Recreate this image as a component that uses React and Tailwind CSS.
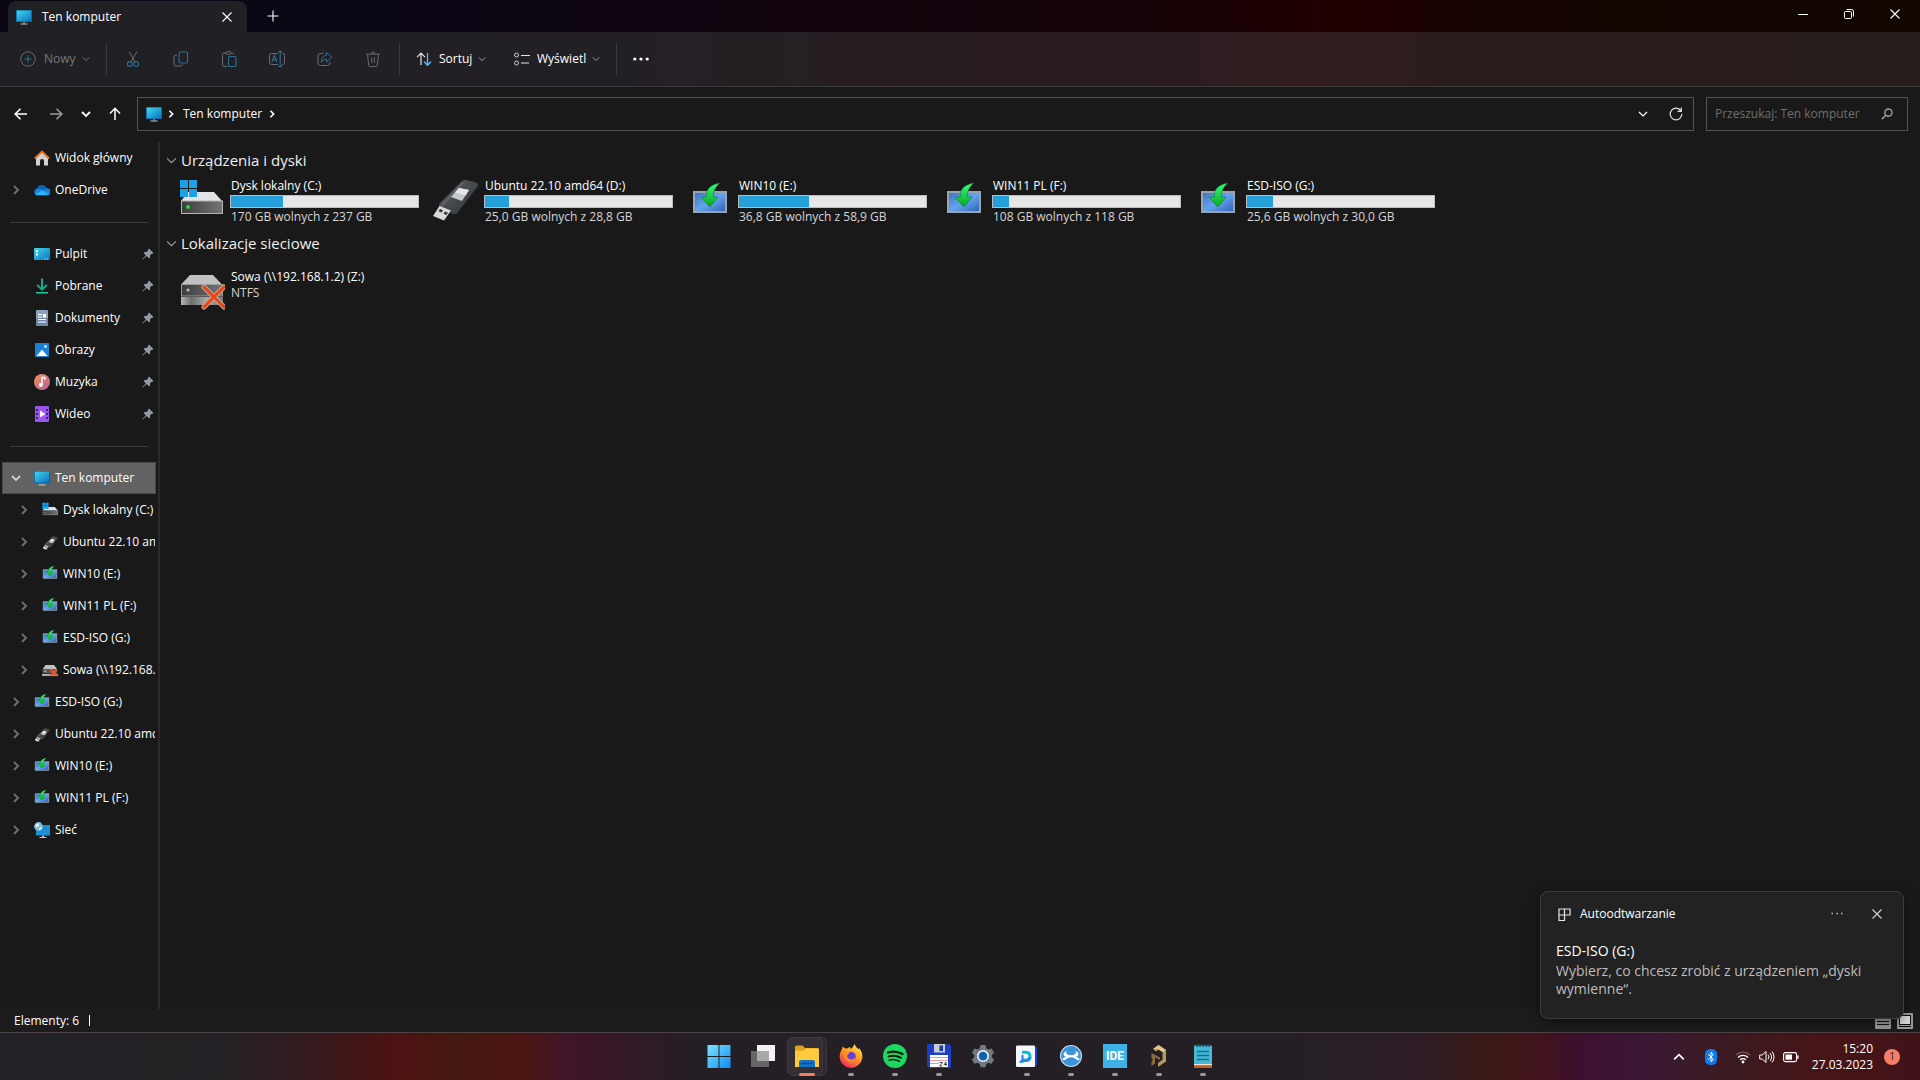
import { useState } from "react";

const Svg = ({ size = 16, box = "0 0 16 16", className = "", children }) => (
  <svg
    width={size}
    height={size}
    viewBox={box}
    fill="none"
    className={`shrink-0 ${className}`}
    aria-hidden="true"
  >
    {children}
  </svg>
);

const Chevron = ({ d, size = 10, width = 1.2, className = "" }) => {
  const paths = {
    down: "M1 3l4 4 4-4",
    up: "M1 7l4-4 4 4",
    right: "M3 1l4 4-4 4",
  };
  return (
    <Svg size={size} box="0 0 10 10" className={className}>
      <path d={paths[d]} stroke="currentColor" strokeWidth={width} />
    </Svg>
  );
};

const CloseIcon = ({ size = 10 }) => (
  <Svg size={size} box="0 0 10 10">
    <path d="M.5.5l9 9M9.500.5l-9 9" stroke="currentColor" strokeWidth="1.100" />
  </Svg>
);

const MonitorIcon = ({ size = 16 }) => (
  <Svg size={size}>
    <defs>
      <linearGradient id="screen" x1="0" y1="0" x2="1" y2="1">
        <stop offset="0" stopColor="#3fd9e8" />
        <stop offset="1" stopColor="#0a72c4" />
      </linearGradient>
    </defs>
    <rect y="1" width="16" height="12" rx=".6" fill="#0b5c96" />
    <rect x=".7" y="1.600" width="14.600" height="10.800" fill="url(#screen)" />
    <path d="M7.200 13h1.600v1.600h-1.600z" fill="#7d8b94" />
    <path d="M4.500 14.500h7v1h-7z" fill="#b9c4ca" />
  </Svg>
);

const HomeIcon = () => (
  <Svg>
    <path d="M2 7l6-5.500L14 7v8.500H10v-4.500a2 2 0 00-4 0v4.500H2z" fill="#cfd1d4" />
    <path d="M.8 8.400L8 1.600l7.200 6.800" stroke="#e8701c" strokeWidth="2" />
  </Svg>
);

const CloudIcon = () => (
  <Svg>
    <path d="M3.500 13A3.500 3.500 0 013 6.200 5.200 5.200 0 0112.600 6 3.600 3.600 0 0112.500 13z" fill="#0b64b8" />
    <path d="M3.500 13.300a3 3 0 01-2.800-4.200C3 6 6 6.800 8 8l5.500-1.800A3.500 3.500 0 0112.500 13.300z" fill="#1387dd" />
    <path d="M1.200 12L8.500 8.200l6 4a3.300 3.300 0 01-2 1.100h-9A3 3 0 011.200 12z" fill="#2fb1f5" />
  </Svg>
);

const DesktopIcon = () => (
  <Svg>
    <rect y="2" width="16" height="12" rx="1" fill="url(#screen)" />
    <path d="M2 4.200h2v2H2zM2 7.600h2v2H2z" fill="#fff" />
    <path d="M10.500 12.500h1.200v1h-1.200zM13 12.500h1.200v1H13z" fill="#d8f4ff" />
  </Svg>
);

const DownloadIcon = () => (
  <Svg>
    <path d="M8 .5v11M3.200 7L8 11.600 12.800 7" stroke="#17a88f" strokeWidth="2" />
    <path d="M2 14.800h12" stroke="#1cc39b" strokeWidth="1.600" />
  </Svg>
);

const DocIcon = () => (
  <Svg>
    <rect x="2" width="12" height="16" rx="1" fill="#8ba3bd" />
    <rect x="2" y="8" width="12" height="8" rx="1" fill="#6d88a6" />
    <path d="M4 4.500h4M4 7h4M4 9.500h8M4 12h8" stroke="#fff" strokeWidth="1.200" />
    <path d="M9 4h3v3.500H9z" fill="#fff" />
  </Svg>
);

const PictureIcon = () => (
  <Svg>
    <rect x="1" y="1" width="14" height="14" rx="1" fill="#1a83d8" />
    <path d="M2.500 14L8 7.800l5.500 6.200z" fill="#fff" />
    <circle cx="11.500" cy="4.500" r="1.400" fill="#cdeaff" />
  </Svg>
);

const MusicIcon = () => (
  <Svg>
    <defs>
      <linearGradient id="music" x1="0" y1="0" x2="1" y2="1">
        <stop offset="0" stopColor="#f2915a" />
        <stop offset="1" stopColor="#b2609f" />
      </linearGradient>
    </defs>
    <circle cx="8" cy="8" r="8" fill="url(#music)" />
    <circle cx="6.800" cy="11" r="1.900" fill="#fff" />
    <path d="M8 11V3.500h2.800v2.300" stroke="#fff" strokeWidth="1.400" />
  </Svg>
);

const VideoIcon = () => (
  <Svg>
    <rect x="1" width="14" height="16" rx="1" fill="#9b55ec" />
    <path d="M2 3h2v2H2zM2 7h2v2H2zM2 11h2v2H2zM12 3h2v2h-2zM12 7h2v2h-2zM12 11h2v2h-2z" fill="#3f1b86" />
    <path d="M6 4.500l5.500 3.500L6 11.500z" fill="#fff" />
  </Svg>
);

const PinIcon = () => (
  <Svg size={12} box="0 0 12 12" className="text-[#8f9ba5]">
    <path d="M7 .5L11.500 5l-1 .8-.8-.1L8 7.600l.2 2L7.300 10.500 4.500 8 .8 11.500.4 11.100 3.800 7.400 1.500 4.800l1-.9 2 .1L6.200 2.300 6.100 1.300z" fill="currentColor" />
  </Svg>
);

const LocalDiskIcon = ({ size = 16, box = "0 0 48 48" }) => (
  <Svg size={size} box={box}>
    <defs>
      <linearGradient id="disk" x1="0" y1="0" x2="1" y2="0">
        <stop offset="0" stopColor="#3c3c3c" />
        <stop offset="1" stopColor="#757575" />
      </linearGradient>
    </defs>
    <path d="M11 19h26l8 9H4z" fill="#e2e3e6" />
    <rect x="4.500" y="28" width="41" height="12.500" fill="url(#disk)" stroke="#b4b4b4" />
    <circle cx="11" cy="34" r="2" fill="#21e03a" />
    <path d="M3 7h8v8H3zM12 7h8v8h-8zM3 16h8v8H3zM12 16h8v8h-8z" fill="#1d9fe8" />
  </Svg>
);

const UsbIcon = ({ size = 16 }) => (
  <Svg size={size} box="0 0 48 48">
    <defs>
      <linearGradient id="usb" x1="0" y1="0" x2="1" y2="1">
        <stop offset="0" stopColor="#5d6468" />
        <stop offset="1" stopColor="#2c3033" />
      </linearGradient>
    </defs>
    <path d="M31 8q2-1.500 5-.8l9 2.300q3 1 1.500 4L27 39q-2 3-5 2L9 34q-2-1.500 0-4z" fill="url(#usb)" />
    <path d="M30 10L9 33l2 1.500L34 9z" fill="#8a9094" opacity=".3" />
    <path d="M28 15l10 2-7 11-11-4z" fill="#c9c9c9" />
    <path d="M28 15l10 2-3.500 5.500L24 19.500z" fill="#e6e6e6" />
    <path d="M8.500 33l11.500 4.500-7 10L2 43z" fill="#d8d8d8" />
    <path d="M9 36l3 1.200-1.500 2.300-3-1.200zM14 38.500l3 1.200-1.500 2.300-3-1.200z" fill="#333" />
  </Svg>
);

const InstallDriveIcon = ({ size = 16, box = "0 0 48 48" }) => (
  <Svg size={size} box={box}>
    <defs>
      <linearGradient id="inst" x1="0" y1="0" x2="1" y2="1">
        <stop offset="0" stopColor="#3f6fc0" />
        <stop offset=".5" stopColor="#64a4ef" />
        <stop offset="1" stopColor="#2d5fb0" />
      </linearGradient>
      <linearGradient id="arrow" x1="0" y1="0" x2="0" y2="1">
        <stop offset="0" stopColor="#35ff7e" />
        <stop offset="1" stopColor="#08a51c" />
      </linearGradient>
    </defs>
    <rect x="9" y="19" width="32" height="20" fill="url(#inst)" stroke="#98a5b0" strokeWidth="2" />
    <path d="M34.500 10q-10 2-12.500 8-.9 3-.6 6h-5.500l8.800 10 8.600-10h-5.200q-.4-7 6.400-14z" fill="url(#arrow)" stroke="#0b7d26" strokeWidth=".6" />
  </Svg>
);

const NetDriveIcon = ({ size = 16 }) => (
  <Svg size={size} box="0 0 48 48">
    <defs>
      <linearGradient id="pipe" x1="0" y1="0" x2="1" y2="0">
        <stop offset="0" stopColor="#b5b5b5" />
        <stop offset=".25" stopColor="#6e6e6e" />
        <stop offset=".6" stopColor="#a8a8a8" />
        <stop offset="1" stopColor="#777" />
      </linearGradient>
    </defs>
    <path d="M13 11h23l9 9.500H4z" fill="#c1c1c1" />
    <rect x="4.500" y="20.500" width="41" height="11.500" fill="url(#disk)" stroke="#9c9c9c" />
    <circle cx="11" cy="26" r="1.600" fill="#bbb" />
    <rect x="4" y="33" width="42" height="8" fill="url(#pipe)" />
    <path d="M27 23l20 20M47 23L27 43" stroke="#c9b8ae" strokeWidth="5" strokeLinecap="round" />
    <path d="M27 23l20 20M47 23L27 43" stroke="#e2491b" strokeWidth="3.200" strokeLinecap="round" />
  </Svg>
);

const SmallNetDriveIcon = () => (
  <Svg>
    <path d="M3.500 3h8.500l3 4v3H.8V7z" fill="#c1c1c1" />
    <path d="M1 7h14v4H1z" fill="#5a5a5a" />
    <path d="M2.500 8.500h1.500v1.200H2.500z" fill="#ddd" />
    <path d="M0 11.800h16V14H0z" fill="#a8a8a8" />
    <path d="M8.800 7.500l6 6.500M14.800 7.500l-6 6.500" stroke="#e2582c" strokeWidth="2.400" />
  </Svg>
);

const NetworkIcon = () => (
  <Svg>
    <rect x="2" y="3" width="14" height="10.500" fill="#1a8fd2" />
    <path d="M8 13.500h2V15H8zM5.500 15h7v.9h-7z" fill="#b9c4ca" />
    <circle cx="4.500" cy="4.500" r="4.400" fill="#7fb9d9" />
    <path d="M1 3.500Q3 1 5.500 1.800 5 4.500 2.500 5.500zM5 6l3-1.500Q8 7.500 5.500 8.500z" fill="#e4f3fa" />
  </Svg>
);

const DIM = "#6c6a70";
const BLUE = "#2f6f96";

const NewIcon = () => (
  <Svg>
    <circle cx="8" cy="8" r="7.200" stroke={DIM} />
    <path d="M8 4.500v7M4.500 8h7" stroke={BLUE} strokeWidth="1.100" />
  </Svg>
);

const toolIcons = [
  {
    name: "Wytnij",
    icon: (
      <Svg>
        <path d="M4 .5l6 10.500M12 .5L6 11" stroke={DIM} />
        <circle cx="4.800" cy="13" r="2.400" stroke={BLUE} strokeWidth="1.100" />
        <circle cx="11.200" cy="13" r="2.400" stroke={BLUE} strokeWidth="1.100" />
      </Svg>
    ),
  },
  {
    name: "Kopiuj",
    icon: (
      <Svg>
        <path d="M4 4H3a2 2 0 00-2 2v7a2 2 0 002 2h4.500a2 2 0 002-1.500" stroke={DIM} />
        <rect x="6" y="1" width="8.500" height="11" rx="1.800" stroke={BLUE} strokeWidth="1.100" />
      </Svg>
    ),
  },
  {
    name: "Wklej",
    icon: (
      <Svg>
        <path d="M5 2H3a1.500 1.500 0 00-1.500 1.500V14A1.500 1.500 0 003 15.500h3M10 2h1.500A1.500 1.500 0 0113 3.500" stroke={DIM} />
        <rect x="4.800" y=".6" width="5.400" height="2.600" rx="1.200" stroke={DIM} />
        <rect x="7.500" y="5.500" width="7.500" height="10" rx="1.300" stroke={BLUE} strokeWidth="1.100" />
      </Svg>
    ),
  },
  {
    name: "Zmień nazwę",
    icon: (
      <Svg>
        <path d="M9 2.500H2.500a2 2 0 00-2 2v7a2 2 0 002 2H9M13 2.500h.5a2 2 0 012 2v7a2 2 0 01-2 2H13" stroke={DIM} />
        <path d="M2.800 11L5.400 4.500 8 11M3.700 9h3.400M9.500.6h3.500M9.500 15.400h3.500M11.200.6v14.800" stroke={BLUE} strokeWidth="1.100" />
      </Svg>
    ),
  },
  {
    name: "Udostępnij",
    icon: (
      <Svg>
        <path d="M6.500 2.500h-3a2.500 2.500 0 00-2.500 2.500v7a2.500 2.500 0 002.500 2.500h7A2.500 2.500 0 0013 12v-1" stroke={DIM} />
        <path d="M9.500 1.500l5.300 4.700-5.300 4.700V8.400Q6.500 8.200 4.200 11q.3-6 5.300-6.800z" stroke={BLUE} strokeLinejoin="round" />
      </Svg>
    ),
  },
  {
    name: "Usuń",
    icon: (
      <Svg>
        <path d="M1 3.200h14M2.500 3.500l1.200 10.700a1.500 1.500 0 001.500 1.300h5.600a1.500 1.500 0 001.500-1.300L13.500 3.500M6 3a2 2 0 014 0M6.700 6.500v5.500M9.300 6.500v5.500" stroke={DIM} />
      </Svg>
    ),
  },
];

const smallDisk = <LocalDiskIcon box="2 5 44 44" />;
const smallInstall = <InstallDriveIcon box="6 10 38 38" />;

const sidebar = [
  { label: "Widok główny", icon: <HomeIcon /> },
  { label: "OneDrive", icon: <CloudIcon />, arrow: "right" },
  { divider: true },
  { label: "Pulpit", icon: <DesktopIcon />, pin: true },
  { label: "Pobrane", icon: <DownloadIcon />, pin: true },
  { label: "Dokumenty", icon: <DocIcon />, pin: true },
  { label: "Obrazy", icon: <PictureIcon />, pin: true },
  { label: "Muzyka", icon: <MusicIcon />, pin: true },
  { label: "Wideo", icon: <VideoIcon />, pin: true },
  { divider: true },
  { label: "Ten komputer", icon: <MonitorIcon />, arrow: "down", active: true },
  { label: "Dysk lokalny (C:)", icon: smallDisk, arrow: "right", child: true },
  { label: "Ubuntu 22.10 amd64 (D:)", icon: <UsbIcon />, arrow: "right", child: true },
  { label: "WIN10 (E:)", icon: smallInstall, arrow: "right", child: true },
  { label: "WIN11 PL (F:)", icon: smallInstall, arrow: "right", child: true },
  { label: "ESD-ISO (G:)", icon: smallInstall, arrow: "right", child: true },
  { label: "Sowa (\\\\192.168.1.2) (Z:)", icon: <SmallNetDriveIcon />, arrow: "right", child: true },
  { label: "ESD-ISO (G:)", icon: smallInstall, arrow: "right" },
  { label: "Ubuntu 22.10 amd64 (D:)", icon: <UsbIcon />, arrow: "right" },
  { label: "WIN10 (E:)", icon: smallInstall, arrow: "right" },
  { label: "WIN11 PL (F:)", icon: smallInstall, arrow: "right" },
  { label: "Sieć", icon: <NetworkIcon />, arrow: "right" },
];

const drives = [
  { name: "Dysk lokalny (C:)", free: "170 GB wolnych z 237 GB", used: 28, icon: <LocalDiskIcon size={48} /> },
  { name: "Ubuntu 22.10 amd64 (D:)", free: "25,0 GB wolnych z 28,8 GB", used: 13, icon: <UsbIcon size={48} /> },
  { name: "WIN10 (E:)", free: "36,8 GB wolnych z 58,9 GB", used: 37.5, icon: <InstallDriveIcon size={48} /> },
  { name: "WIN11 PL (F:)", free: "108 GB wolnych z 118 GB", used: 8.5, icon: <InstallDriveIcon size={48} /> },
  { name: "ESD-ISO (G:)", free: "25,6 GB wolnych z 30,0 GB", used: 14, icon: <InstallDriveIcon size={48} /> },
];

const apps = [
  {
    name: "Start",
    icon: (
      <Svg size={24} box="0 0 24 24">
        <defs>
          <linearGradient id="win" x1="0" y1="0" x2="24" y2="24" gradientUnits="userSpaceOnUse">
            <stop offset="0" stopColor="#7fe9ff" />
            <stop offset="1" stopColor="#0d8bf2" />
          </linearGradient>
        </defs>
        <path d="M.5 1h11v11H.5zM12.500 1h11v11h-11zM.5 13h11v11H.5zM12.500 13h11v11h-11z" fill="url(#win)" />
      </Svg>
    ),
  },
  {
    name: "Widok zadań",
    icon: (
      <Svg size={24} box="0 0 24 24">
        <rect x="6" y="1" width="18" height="16" fill="#f2f2f2" />
        <rect y="7" width="18" height="16" fill="#666" />
        <rect x="6" y="7" width="12" height="10" fill="#a9a9a9" />
      </Svg>
    ),
  },
  {
    name: "Eksplorator plików",
    active: true,
    icon: (
      <Svg size={24} box="0 0 24 24">
        <path d="M0 3q0-1.500 1.500-1.500h6L10 4h12.500Q24 4 24 5.500V9H0z" fill="#e0a21a" />
        <path d="M0 7.500q0-1 1-1h7.500L11 4.500h12q1 0 1 1V23H0z" fill="#ffcb3d" />
        <path d="M4 23v-5q0-2 2-2h12q2 0 2 2v5z" fill="#1272c4" />
        <path d="M7 19.500h10" stroke="#0b4f92" strokeWidth="1.500" strokeLinecap="round" />
      </Svg>
    ),
  },
  {
    name: "Firefox",
    running: true,
    icon: (
      <Svg size={24} box="0 0 24 24">
        <defs>
          <linearGradient id="fox" x1=".8" y1="0" x2=".2" y2="1">
            <stop offset="0" stopColor="#ffe94a" />
            <stop offset=".45" stopColor="#ff9a22" />
            <stop offset="1" stopColor="#f0206e" />
          </linearGradient>
        </defs>
        <path d="M15.500 0q1 3 4 5.200l.5-1.200q4 4.500 3.300 10A11.400 11.400 0 01.6 12.500Q.5 8.500 3 5l.6-2.500L6 4.500q1.200-.3 2.500 0L11 2.700 11.500 5Q14.500 3.500 15.500 0z" fill="url(#fox)" />
        <circle cx="12" cy="12.500" r="4.800" fill="#6a3fd0" />
        <path d="M4 8q4-2 7 .5L8.500 11q-1 3.500 3 4.500 3 .5 4.500-2-.5 5-5 5-6-1-7-10.500z" fill="#ff8d1e" />
      </Svg>
    ),
  },
  {
    name: "Spotify",
    running: true,
    icon: (
      <Svg size={24} box="0 0 24 24">
        <circle cx="12" cy="12" r="12" fill="#1ed760" />
        <g stroke="#0d1a10" strokeLinecap="round">
          <path d="M5 8.500q7.500-2.300 14.500 1.500" strokeWidth="2.300" />
          <path d="M5.700 12.400q6.500-1.800 12.300 1.400" strokeWidth="1.900" />
          <path d="M6.200 16q5.500-1.300 10.300 1.300" strokeWidth="1.500" />
        </g>
      </Svg>
    ),
  },
  {
    name: "Total Commander",
    running: true,
    icon: (
      <Svg size={24} box="0 0 24 24">
        <path d="M0 0h22l2 2v22H2l-2-2z" fill="#1d3fc4" />
        <rect x="7" width="11" height="8.500" fill="#c6cbd6" />
        <rect x="12.500" y="1.500" width="3.500" height="5.500" fill="#1c3a9c" />
        <rect x="3" y="11" width="18" height="12" fill="#fff" />
        <path d="M3 13.500h18M3 16.500h18M3 19.500h9" stroke="#e79aa0" strokeWidth="1.200" />
        <path d="M12.500 18.500h3l-3 3.500h3M19 22v-4l-2 2.500h3" stroke="#333" strokeWidth=".9" />
      </Svg>
    ),
  },
  {
    name: "Ustawienia",
    icon: (
      <Svg size={24} box="0 0 24 24">
        <path d="M9.500 1h5l.8 3.300 2 1.200 3.300-1 2.500 4.300L20.800 11v2.200l2.300 2.200-2.500 4.300-3.300-1-2 1.200-.8 3.300h-5l-.8-3.300-2-1.200-3.300 1L.9 15.400l2.300-2.200V11L.9 8.800l2.500-4.300 3.300 1 2-1.200z" fill="#6f7a83" />
        <circle cx="12" cy="12.100" r="6" fill="#e8edf1" />
        <circle cx="12" cy="12.100" r="4.300" fill="#0f5fb3" />
      </Svg>
    ),
  },
  {
    name: "DeepL",
    running: true,
    icon: (
      <Svg size={24} box="0 0 24 24">
        <path d="M19 2l3 1.500V21l-3 2z" fill="#1747c9" />
        <rect x="1" y="1.500" width="19" height="21.500" rx="1" fill="#f4f7fb" />
        <path d="M7 8.300h4q4 .2 4 4t-4 4H7" stroke="#12b8d8" strokeWidth="3" />
        <path d="M7.500 11v6.800H5.800l1.700-2" stroke="#1f7df0" strokeWidth="2" />
        <path d="M7 16.500h4q3.500 0 4-3.500" stroke="#1f8cf0" strokeWidth="3" />
      </Svg>
    ),
  },
  {
    name: "Synchronizacja",
    running: true,
    icon: (
      <Svg size={24} box="0 0 24 24">
        <circle cx="12" cy="12" r="10.500" fill="#3b93da" stroke="#bcd6ea" strokeWidth="1.200" />
        <path d="M4.500 9l3-2-.3 2.500 2 1.200q2.800.8 5.600 0l2-1.200L16.500 7l3 2-.5 3-2 .6 4 2.400-2 1.500-4-2.500q-3-1.500-6 0l-4 2.500L3 15l4-2.400-2-.6z" fill="#fff" />
      </Svg>
    ),
  },
  {
    name: "IDE",
    running: true,
    icon: (
      <span className="flex h-6 w-6 items-center justify-center bg-[#3eb2e6] font-['Roboto',sans-serif] text-[12px] leading-none font-bold text-white">
        IDE
      </span>
    ),
  },
  {
    name: "Projekt",
    running: true,
    icon: (
      <Svg size={24} box="0 0 24 24">
        <path d="M6 5l5.500-4L19 6v11.500L11 23v-4l4.500-3.200V8L11.500 5.500 9 7.500z" fill="#b8975a" />
        <path d="M4.500 9L13 13.500v2.500L8 13.500v6L4.500 22v-4.500l1.500-1.500-1.500-2z" fill="#8a6d3b" />
        <path d="M6 5l5.500-4L19 6l-3.500 2-4-2.500z" fill="#e0c48c" />
      </Svg>
    ),
  },
  {
    name: "Notatnik",
    running: true,
    icon: (
      <Svg size={24} box="0 0 24 24">
        <rect x="3" y="1.500" width="18" height="20" fill="#45b8d6" />
        <path d="M6 0v3M9 0v3M12 0v3M15 0v3M18 0v3" stroke="#14495c" strokeWidth="1.300" />
        <path d="M6 7.500h12M6 11.500h12M6 15.500h12" stroke="#12708f" strokeWidth="1.500" />
        <path d="M3 20h18v1.500H3z" fill="#f3e6d6" />
        <path d="M3 21.500h18V24H3z" fill="#c0611e" />
      </Svg>
    ),
  },
];

function TitleBar() {
  return (
    <header className="flex h-8 bg-[linear-gradient(90deg,#0a0713_0%,#0b0614_20%,#100511_34%,#130209_55%,#1a0205_64%,#220000_70%,#180300_76%,#130700_84%,#120800_100%)]">
      <div className="mt-px ml-2 flex w-[239px] items-center rounded-t-lg bg-[#212024] px-2">
        <MonitorIcon />
        <span className="ml-2.5 flex-1 text-xs font-medium">Ten komputer</span>
        <button aria-label="Zamknij kartę" className="flex h-6 w-6 items-center justify-center">
          <CloseIcon />
        </button>
      </div>
      <button aria-label="Nowa karta" className="ml-2.5 flex w-8 items-center justify-center">
        <Svg size={12} box="0 0 12 12">
          <path d="M6 .5v11M.5 6h11" stroke="currentColor" strokeWidth="1.100" />
        </Svg>
      </button>
      <div className="mr-0.5 ml-auto flex h-7">
        <button aria-label="Minimalizuj" className="flex w-[46px] items-center justify-center">
          <Svg size={10} box="0 0 10 10">
            <path d="M0 5.500h10" stroke="currentColor" />
          </Svg>
        </button>
        <button aria-label="Przywróć" className="flex w-[46px] items-center justify-center">
          <Svg size={10} box="0 0 10 10">
            <rect x=".5" y="2.500" width="7" height="7" rx="1" stroke="currentColor" />
            <path d="M2.500.5h5a2 2 0 012 2v5" stroke="currentColor" />
          </Svg>
        </button>
        <button aria-label="Zamknij" className="flex w-[46px] items-center justify-center">
          <CloseIcon />
        </button>
      </div>
    </header>
  );
}

const Separator = () => <div className="h-8 w-px bg-[#3a383d]" />;

function Toolbar() {
  return (
    <div className="flex h-[55px] items-center border-b border-[#3c3a3d] bg-[linear-gradient(90deg,#212024_0%,#232025_33%,#281d20_50%,#2a1c22_60%,#311c1e_68%,#2a1d1d_76%,#271d1c_100%)] pl-3">
      <button className="flex h-8 w-[86px] items-center px-2 text-xs text-[#77757a]" disabled>
        <NewIcon />
        <span className="mr-auto ml-2">Nowy</span>
        <Chevron d="down" size={8} />
      </button>
      <div className="w-2" />
      <Separator />
      <div className="mx-0.5 flex">
        {toolIcons.map((tool) => (
          <button
            key={tool.name}
            aria-label={tool.name}
            className="flex h-8 w-12 items-center justify-center"
            disabled
          >
            {tool.icon}
          </button>
        ))}
      </div>
      <Separator />
      <button className="mr-3 ml-2 flex h-8 w-[86px] items-center px-2 text-xs">
        <Svg>
          <path d="M5 14V2.500M1 6.200L5 2l4 4.200" stroke="#e4e4e4" strokeWidth="1.200" />
          <path d="M11.500 2v12M8 10.500l3.500 3.700L15 10.500" stroke="#4cc2ff" strokeWidth="1.300" />
        </Svg>
        <span className="ml-[7px]">Sortuj</span>
        <Chevron d="down" size={8} className="ml-auto text-[#a5a3a7]" />
      </button>
      <button className="mr-2 flex h-8 w-[102px] items-center px-2 text-xs">
        <Svg>
          <circle cx="2.500" cy="4" r="2" stroke="#c9c9c9" />
          <circle cx="2.500" cy="12" r="2" stroke="#c9c9c9" />
          <path d="M7 4.500h9M7 12h8" stroke="#e4e4e4" strokeWidth="1.100" />
        </Svg>
        <span className="ml-[7px]">Wyświetl</span>
        <Chevron d="down" size={8} className="ml-auto text-[#a5a3a7]" />
      </button>
      <Separator />
      <button aria-label="Więcej" className="flex h-8 w-12 items-center justify-center">
        <Svg>
          <circle cx="1.800" cy="8" r="1.600" fill="#fff" />
          <circle cx="8" cy="8" r="1.600" fill="#fff" />
          <circle cx="14.200" cy="8" r="1.600" fill="#fff" />
        </Svg>
      </button>
    </div>
  );
}

function AddressBar() {
  const [query, setQuery] = useState("");

  return (
    <div className="flex items-center pt-2.5 pr-3 pb-[11px]">
      <div className="flex w-[137px] items-center pl-1.5">
        <button aria-label="Wstecz" className="flex h-8 w-[30px] items-center justify-center">
          <Svg size={14} box="0 0 14 14">
            <path d="M13 7H1.500M6.500 1.800L1.200 7l5.300 5.200" stroke="#fff" strokeWidth="1.600" />
          </Svg>
        </button>
        <button aria-label="Dalej" className="ml-1 flex h-8 w-8 items-center justify-center">
          <Svg size={14} box="0 0 14 14">
            <path d="M1 7h11.500M7.500 1.800L12.800 7l-5.300 5.200" stroke="#9a9a9a" strokeWidth="1.600" />
          </Svg>
        </button>
        <button aria-label="Ostatnie lokalizacje" className="flex h-8 w-7 items-center justify-center">
          <Chevron d="down" width={1.800} />
        </button>
        <button aria-label="W górę" className="flex h-8 w-[30px] items-center justify-center">
          <Svg size={14} box="0 0 14 14">
            <path d="M7 13V1.500M2 6.500L7 1.300l5 5.200" stroke="#fff" strokeWidth="1.500" />
          </Svg>
        </button>
      </div>
      <div className="flex h-[34px] flex-1 items-center border border-[#535353] bg-[#191919] pl-2 text-xs">
        <MonitorIcon />
        <Chevron d="right" size={8} width={2} className="ml-[5px]" />
        <a href="#ten-komputer" className="ml-2">
          Ten komputer
        </a>
        <Chevron d="right" size={8} width={2} className="ml-1.5" />
        <button aria-label="Poprzednie lokalizacje" className="mr-[9px] ml-auto flex h-8 w-6 items-center justify-center">
          <Chevron d="down" />
        </button>
        <button aria-label="Odśwież" className="mr-[5px] flex h-8 w-6 items-center justify-center">
          <Svg size={14} box="0 0 14 14">
            <path d="M12.800 7A5.800 5.800 0 117 1.200q3.200 0 5 2.800M12.300.5v3.800H8.500" stroke="#e0e0e0" strokeWidth="1.200" />
          </Svg>
        </button>
      </div>
      <label className="ml-3 flex h-[34px] w-[202px] items-center border border-[#535353] pr-3.5 pl-2">
        <input
          type="text"
          aria-label="Przeszukaj"
          placeholder="Przeszukaj: Ten komputer"
          value={query}
          onChange={(e) => setQuery(e.target.value)}
          className="w-full min-w-0 bg-transparent text-xs outline-none placeholder:text-[#6f6f6f]"
        />
        <Svg size={12} box="0 0 12 12">
          <circle cx="7.400" cy="4.600" r="3.600" stroke="#a0a0a0" strokeWidth="1.400" />
          <path d="M4.800 7.200L.8 11.200" stroke="#a0a0a0" strokeWidth="1.600" />
        </Svg>
      </label>
    </div>
  );
}

function SidebarRow({ item }) {
  if (item.divider) {
    return (
      <li className="flex h-8 items-center px-2">
        <hr className="w-full border-[#3b3b3b]" />
      </li>
    );
  }
  return (
    <li>
      <a
        href="#folder"
        className={`flex h-8 items-center overflow-hidden border whitespace-nowrap ${
          item.active ? "border-[#4a4a4a] bg-[#626262]" : "border-transparent"
        } ${item.child ? "pl-4" : "pl-2"}`}
      >
        <span className={`flex w-[23px] shrink-0 ${item.active ? "text-[#d0d0d0]" : "text-[#707070]"}`}>
          {item.arrow && <Chevron d={item.arrow} width={1.800} />}
        </span>
        {item.icon}
        <span className="ml-[5px]">{item.label}</span>
        {item.pin && (
          <span className="mr-px ml-auto">
            <PinIcon />
          </span>
        )}
      </a>
    </li>
  );
}

function Sidebar() {
  return (
    <nav className="w-40 shrink-0 border-r-2 border-[#2a2a2a] pr-0.5 pl-0.5 text-xs">
      <ul>
        {sidebar.map((item, i) => (
          <SidebarRow key={i} item={item} />
        ))}
      </ul>
    </nav>
  );
}

const GroupTitle = ({ children }) => (
  <h2 className="flex h-6 items-center gap-1 pl-1.5 text-[15px] text-[#f0f0f0]">
    <Chevron d="down" size={11} width={1} className="text-[#a0a0a0]" />
    {children}
  </h2>
);

function Files() {
  return (
    <main className="flex-1 pt-1.5 text-xs">
      <GroupTitle>Urządzenia i dyski</GroupTitle>
      <ul className="mt-px grid grid-cols-[repeat(auto-fill,254px)] pl-[17px]">
        {drives.map((drive) => (
          <li key={drive.name} className="flex h-[58px] gap-[5px]">
            {drive.icon}
            <div className="w-[189px] pt-[5px] leading-4">
              <p className="pl-px">{drive.name}</p>
              <div className="my-px h-[13px] border border-[#bcbcbc] bg-[#e6e6e6]">
                <div className="h-full bg-[#26a0da]" style={{ width: `${drive.used}%` }} />
              </div>
              <p className="pl-px text-[#d5d5d5]">{drive.free}</p>
            </div>
          </li>
        ))}
      </ul>
      <GroupTitle>Lokalizacje sieciowe</GroupTitle>
      <div className="mt-[9px] flex gap-1.5 pl-[17px]">
        <NetDriveIcon size={48} />
        <div className="pt-[5px] leading-4">
          <p>Sowa (\\192.168.1.2) (Z:)</p>
          <p className="text-[#d5d5d5]">NTFS</p>
        </div>
      </div>
    </main>
  );
}

function StatusBar() {
  return (
    <footer className="flex h-[23px] items-center bg-[#1c1c1c] pr-[7px] pl-3.5 text-xs">
      <span>Elementy: 6</span>
      <span className="ml-2.5 h-[11px] w-px bg-white" />
      <button aria-label="Szczegóły" className="ml-auto">
        <Svg>
          <rect width="16" height="16" rx="1" fill="#9b9b9b" />
          <path d="M2 4.500h12M2 8.500h12M2 11.500h12" stroke="#111" />
        </Svg>
      </button>
      <button aria-label="Duże ikony" className="ml-1.5">
        <Svg>
          <rect width="16" height="16" rx="1" fill="#9b9b9b" />
          <rect x="2.500" y="2.500" width="11" height="9" fill="#dcdcdc" stroke="#111" />
          <path d="M2 13.500h12" stroke="#111" />
        </Svg>
      </button>
    </footer>
  );
}

function Toast() {
  return (
    <section className="absolute right-4 bottom-[61px] h-32 w-[364px] rounded-lg border border-[#3d3d3d] bg-[#222] shadow-[0_4px_12px_rgba(0,0,0,0.4)]">
      <div className="flex h-11 items-center pr-3.5 pl-[17px]">
        <Svg size={13} box="0 0 13 13">
          <path d="M1 1h11v6H1zM6.500 1v11.500H1V7M1 1v11.500" stroke="#e8e8e8" strokeWidth="1.200" />
        </Svg>
        <h3 className="ml-[9px] flex-1 text-xs font-medium">Autoodtwarzanie</h3>
        <button aria-label="Opcje" className="flex h-6 w-6 items-center justify-center">
          <Svg size={12} box="0 0 12 12">
            <path d="M.5 5.500H2M5.200 5.500h1.600M10 5.500h1.500" stroke="#bbb" strokeWidth="1.500" />
          </Svg>
        </button>
        <button aria-label="Odrzuć" className="ml-4 flex h-6 w-6 items-center justify-center text-[#d5d5d5]">
          <CloseIcon />
        </button>
      </div>
      <div className="px-[15px] pt-1.5 text-[14px] leading-[18px]">
        <p className="mb-0.5">ESD-ISO (G:)</p>
        <p className="text-[#bdbdbd]">
          Wybierz, co chcesz zrobić z urządzeniem „dyski wymienne“.
        </p>
      </div>
    </section>
  );
}

function Tray() {
  return (
    <div className="flex items-center justify-end pr-5">
      <button aria-label="Ukryte ikony" className="mr-[18px]">
        <Chevron d="up" size={12} width={1.400} />
      </button>
      <Svg className="mr-4">
        <rect x="2" width="12" height="16" rx="5" fill="#0a7bf0" />
        <path d="M5.200 5.200l5.300 5.200L8 12.800V3.200l2.500 2.400-5.300 5.200" stroke="#fff" />
      </Svg>
      <div className="flex gap-2">
        <Svg>
          <path d="M1 6a10 10 0 0114 0" stroke="#7d5c62" strokeWidth="1.300" />
          <path d="M3 8.500a7 7 0 0110 0M5.200 10.800a4 4 0 015.600 0" stroke="#fff" strokeWidth="1.400" />
          <circle cx="8" cy="13" r="1.400" fill="#fff" />
        </Svg>
        <Svg>
          <path d="M.7 6v4h2.500L7 13.500v-11L3.200 6z" stroke="#fff" strokeLinejoin="round" />
          <path d="M9 5.800a3.300 3.300 0 010 4.400M11 4a6 6 0 010 8M13 2.500a8.500 8.500 0 010 11" stroke="#fff" />
        </Svg>
        <Svg>
          <rect x=".6" y="3.600" width="13" height="9" rx="1.800" stroke="#fff" strokeWidth="1.100" />
          <path d="M2.500 5.500h6.500v5.200H2.500z" fill="#fff" />
          <path d="M14.200 6.500h1.400v3.200h-1.400z" fill="#fff" />
        </Svg>
      </div>
      <p className="mr-[11px] w-[74px] text-right text-xs leading-4">
        15:20
        <br />
        27.03.2023
      </p>
      <span className="flex h-4 w-4 items-center justify-center rounded-full bg-[#f47f67] text-[10px] text-[#3a1512]">
        1
      </span>
    </div>
  );
}

function Taskbar() {
  return (
    <div className="grid h-12 grid-cols-[1fr_auto_1fr] border-t border-[#4c4245] bg-[linear-gradient(90deg,#222125_0%,#252226_12%,#341b1f_16%,#4d1212_20.5%,#43180f_24%,#4d1512_27%,#401527_29.500%,#351727_32%,#241f24_36%,#241f24_67%,#2c1d29_73%,#3a1a16_77.500%,#41131b_80%,#3d1030_82.500%,#3a1833_86%,#3a1a20_90%,#471517_95%,#401217_100%)]">
      <div />
      <div className="flex pl-0.5">
        {apps.map((app) => (
          <button
            key={app.name}
            aria-label={app.name}
            className="relative flex w-11 items-center justify-center pb-0.5"
          >
            {app.active && (
              <>
                <span className="absolute top-1 right-0.5 h-[39px] w-8 rounded-md border border-[#3d383d] bg-[#2c282d]" />
                <span className="absolute top-1 left-0.5 h-[39px] w-9 rounded-md border border-[#403b40] bg-[#332f34]" />
              </>
            )}
            <span className="relative">{app.icon}</span>
            {app.active && <span className="absolute bottom-1 h-[3px] w-4 rounded-full bg-[#f47f67]" />}
            {app.running && <span className="absolute bottom-1 h-[3px] w-1.5 rounded-full bg-[#9b999c]" />}
          </button>
        ))}
      </div>
      <Tray />
    </div>
  );
}

export default function App() {
  return (
    <div className="relative flex min-h-screen flex-col bg-[#191919] font-['Open_Sans',sans-serif] text-white">
      <TitleBar />
      <Toolbar />
      <AddressBar />
      <div className="flex flex-1">
        <Sidebar />
        <Files />
      </div>
      <StatusBar />
      <Taskbar />
      <Toast />
    </div>
  );
}
